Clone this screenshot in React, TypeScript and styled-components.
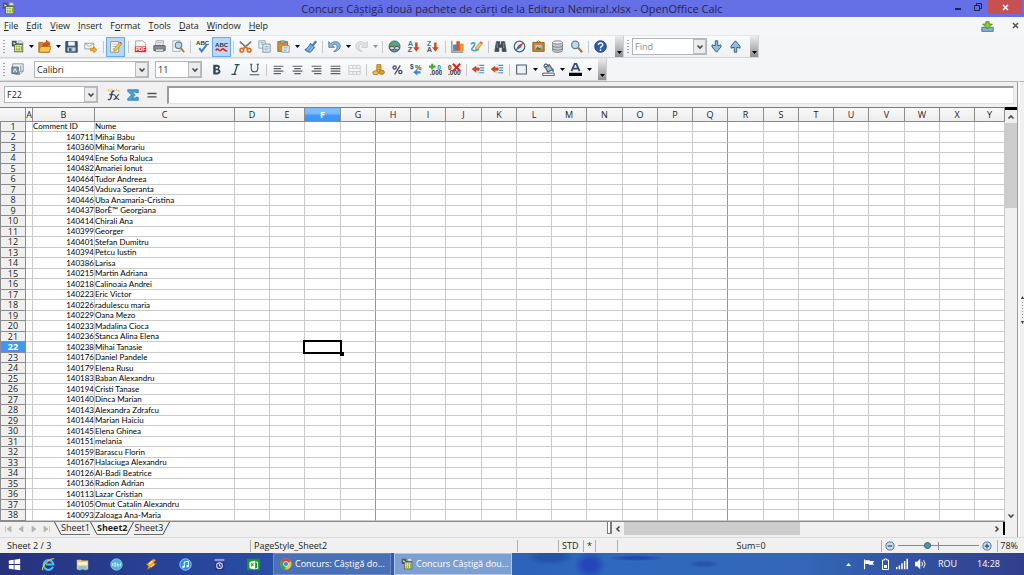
import React from "react";
import styled, { createGlobalStyle, css } from "styled-components";

const Global = createGlobalStyle`
  *, *::before, *::after { box-sizing: border-box; }
  html, body { margin: 0; padding: 0; }
  body { background: #f0f0f0; font-family: "Open Sans", "Noto Sans", sans-serif; font-size: 9px; line-height: 12px; color: #1c1c1c; }
  button, input, select { font: inherit; color: inherit; margin: 0; padding: 0; border: 0; background: none; border-radius: 0; }
  button:focus, input:focus, select:focus { outline: none; }
`;

/* ---------- window frame ---------- */

const Window = styled.div`
  display: flex;
  flex-direction: column;
  height: 100vh;
  overflow: hidden;
`;

const TitleBar = styled.header`
  flex: none;
  display: grid;
  grid-template-columns: 1fr auto 1fr;
  height: 17px;
  background: #6570e6;
  color: #26264e;
`;

const TitleIcon = styled.span`
  display: flex;
  align-items: center;
  padding-left: 2px;
`;

const Title = styled.h1`
  margin: 0;
  font-size: 11px;
  line-height: 17px;
  font-weight: 400;
  white-space: nowrap;
`;

const WindowControls = styled.div`
  display: flex;
  justify-content: flex-end;
  align-items: flex-start;
  padding-right: 2px;
`;

const WindowButton = styled.button<{ $close?: boolean }>`
  display: flex;
  align-items: center;
  justify-content: center;
  width: ${(p) => (p.$close ? 34 : 20)}px;
  height: 14px;
  background: ${(p) => (p.$close ? "#c75050" : "transparent")};
`;

const MenuBar = styled.nav`
  flex: none;
  display: flex;
  align-items: center;
  gap: 8px;
  height: 18px;
  padding: 0 4px;
  background: #f5f6f8;
`;

const MenuItem = styled.button`
  line-height: 16px;
  white-space: nowrap;
`;

const Mnemonic = styled.u`
  text-underline-offset: 1px;
`;

const MenuEnd = styled.div`
  display: flex;
  align-items: center;
  gap: 18px;
  margin-left: auto;
`;

const PlainIconButton = styled.button`
  display: flex;
`;

/* ---------- toolbars ---------- */

const ToolbarRow = styled.div`
  flex: none;
  display: flex;
  height: 23px;
  background: #f4f5f7;
`;

const Toolbar = styled.div`
  display: flex;
  align-items: center;
  height: 23px;
  border-top: 1px solid #e4e5e7;
  border-right: 1px solid #cfcfd1;
  border-bottom: 1px solid #d6d7d9;
  background: linear-gradient(#fafbfc, #eff0f2);
`;

const Grip = styled.span`
  width: 2px;
  height: 14px;
  margin: 0 3px;
  background: repeating-linear-gradient(#a2a2a4 0 1px, transparent 1px 3px);
`;

const ToolButton = styled.button<{ $on?: boolean }>`
  display: flex;
  align-items: center;
  justify-content: center;
  width: 19px;
  height: 20px;
  border: 1px solid transparent;
  ${(p) =>
    p.$on &&
    css`
      background: #b9d8f8;
      border-color: #6aa9ea;
    `}
`;

const ArrowButton = styled.button<{ $dim?: boolean }>`
  display: flex;
  align-items: center;
  justify-content: center;
  width: 8px;
  height: 20px;
  opacity: ${(p) => (p.$dim ? 0.4 : 1)};
`;

const Separator = styled.span<{ $wide?: boolean }>`
  width: ${(p) => (p.$wide ? 6 : 5)}px;
  height: 12px;
  background: linear-gradient(#c6c7ca, #c6c7ca) center / 1px 100% no-repeat;
`;

const Overflow = styled.button`
  display: flex;
  align-items: flex-end;
  justify-content: center;
  width: 8px;
  height: 21px;
  margin-left: 5px;
  padding-bottom: 3px;
  background: linear-gradient(#ececec, #8f8f8f);
`;

const Combo = styled.div<{ $width: number; $gap?: number }>`
  display: flex;
  width: ${(p) => p.$width}px;
  height: 17px;
  margin-left: ${(p) => p.$gap || 0}px;
  border: 1px solid #b4b5ba;
  background: #fff;
`;

const ComboInput = styled.input`
  flex: 1;
  min-width: 0;
  padding-left: 2px;
  line-height: 15px;
  &::placeholder { color: #8a8a8a; opacity: 1; }
`;

const ComboButton = styled.button`
  display: flex;
  align-items: center;
  justify-content: center;
  width: 13px;
  height: 15px;
  border: 1px solid #bcbcbc;
  background: #ececec;
`;

const Gap = styled.span<{ $wide?: boolean }>`
  width: ${(p) => (p.$wide ? 6 : 5)}px;
`;

/* ---------- work area ---------- */

const Work = styled.div`
  flex: 1;
  min-height: 0;
  display: flex;
  background: #f0f0f0;
`;

const Main = styled.main`
  flex: 1;
  min-width: 0;
  display: flex;
  flex-direction: column;
  border-top: 1px solid #b2b2b2;
  border-right: 1px solid #9c9c9c;
`;

const SideStrip = styled.aside`
  flex: none;
  display: flex;
  align-items: center;
  justify-content: center;
  width: 6px;
  border-top: 1px solid #b2b2b2;
  border-left: 2px solid #fafafa;
`;

const FormulaBar = styled.div`
  flex: none;
  display: flex;
  align-items: center;
  height: 25px;
  padding: 0 3px 0 4px;
`;

const FormulaInput = styled.input`
  flex: 1;
  min-width: 0;
  height: 18px;
  margin-left: 6px;
  padding: 0 3px;
  border: 1px solid #e2e2e2;
  border-top: 2px solid #9b9b9b;
  border-left: 2px solid #9b9b9b;
  background: #fff;
`;

const SheetArea = styled.div`
  flex: 1;
  min-height: 0;
  display: flex;
`;

const GridClip = styled.div`
  flex: 1;
  min-width: 0;
  overflow: hidden;
  background: #fff;
  border-bottom: 1px solid #8a8a8a;
`;

const Sheet = styled.table`
  table-layout: fixed;
  width: 100%;
  border-collapse: separate;
  border-spacing: 0;
`;

const ColumnHead = styled.th<{ $selected?: boolean }>`
  height: 15px;
  padding: 0;
  border-top: 1px solid #7e7e7e;
  border-right: 1px solid #8c8c8c;
  border-bottom: 1px solid #8c8c8c;
  background: ${(p) => (p.$selected ? "linear-gradient(#7cbcfb 0 40%, #3f97f3 60%)" : "linear-gradient(#f9f9f9, #ededed)")};
  color: ${(p) => (p.$selected ? "#fff" : "#222")};
  font-weight: ${(p) => (p.$selected ? 700 : 400)};
  line-height: 12px;
`;

const RowHead = styled.th<{ $selected?: boolean }>`
  padding: 0;
  border-right: 1px solid #8c8c8c;
  border-bottom: 1px solid #8c8c8c;
  border-left: 1px solid #8c8c8c;
  background: ${(p) => (p.$selected ? "#3f97f3" : "#f0f0f0")};
  color: ${(p) => (p.$selected ? "#fff" : "#222")};
  font-weight: ${(p) => (p.$selected ? 700 : 400)};
`;

const Row = styled.tr`
  height: 11px;
  line-height: 10px;
  &:nth-child(odd) { height: 10px; line-height: 9px; }
`;

const Cell = styled.td<{ $right?: boolean; $page?: boolean; $active?: boolean }>`
  padding: 0;
  border-right: 1px solid ${(p) => (p.$page ? "#969696" : "#cacaca")};
  border-bottom: 1px solid #cacaca;
  font-family: Lato, "Noto Sans", sans-serif;
  font-size: 8px;
  color: #000;
  text-align: ${(p) => (p.$right ? "right" : "left")};
  white-space: nowrap;
  ${(p) => p.$active && css`position: relative;`}
`;

const CellCursor = styled.span`
  position: absolute;
  inset: -2px;
  border: 2px solid #000;
  &::after {
    content: "";
    position: absolute;
    right: -4px;
    bottom: -4px;
    width: 4px;
    height: 4px;
    background: #000;
  }
`;

const VerticalBar = styled.div`
  flex: none;
  display: flex;
  flex-direction: column;
  width: 12px;
  border-top: 3px solid #000;
`;

const ScrollArrow = styled.button`
  flex: none;
  display: flex;
  align-items: center;
  justify-content: center;
  width: 12px;
  height: 13px;
`;

const Track = styled.div<{ $row?: boolean }>`
  flex: 1;
  min-height: 0;
  display: flex;
  flex-direction: ${(p) => (p.$row ? "row" : "column")};
`;

const Thumb = styled.div<{ $share: number }>`
  flex: 0 0 ${(p) => p.$share}%;
  background: #cdcdcd;
`;

const TabRow = styled.div`
  flex: none;
  display: flex;
  align-items: flex-start;
  height: 15px;
  padding-right: 12px;
`;

const TabNav = styled.div`
  display: flex;
  align-items: center;
  width: 54px;
  height: 13px;
  padding-left: 1px;
`;

const NavButton = styled.button`
  display: flex;
  justify-content: center;
  width: 13px;
`;

const Tab = styled.button<{ $active?: boolean }>`
  height: 13px;
  border-bottom: 1px solid #6c6c6c;
  background: ${(p) => (p.$active ? "#fff" : "#f0f0f0")};
  font-weight: ${(p) => (p.$active ? 700 : 400)};
  line-height: 12px;
`;

const Tabs = styled.div`
  flex: none;
  display: flex;
  width: 607px;
`;

const SplitHandle = styled.span`
  flex: none;
  width: 5px;
  height: 12px;
  border: 1px solid #7a7a7a;
  border-right-width: 2px;
  border-top: 0;
  background: #fff;
`;

const HorizontalBar = styled.div`
  flex: 1;
  display: flex;
  height: 13px;
  border-right: 2px solid #000;
`;

/* ---------- status bar ---------- */

const StatusBar = styled.footer`
  flex: none;
  display: flex;
  align-items: center;
  height: 16px;
  border-top: 1px solid #dadada;
  background: #f0f0f0;
  padding-right: 6px;
`;

const StatusCell = styled.div<{ $width?: number; $center?: boolean; $first?: boolean }>`
  flex: ${(p) => (p.$width ? `0 0 ${p.$width}px` : "1 1 0")};
  height: 12px;
  padding-left: ${(p) => (p.$first ? 7 : 3)}px;
  border-right: 1px solid #b0b0b0;
  text-align: ${(p) => (p.$center ? "center" : "left")};
  white-space: nowrap;
`;

const ZoomGroup = styled.div`
  display: flex;
  align-items: center;
  gap: 3px;
  width: 116px;
  height: 12px;
  padding: 0 5px 0 3px;
  border-right: 1px solid #b0b0b0;
`;

const ZoomSlider = styled.input`
  flex: 1;
  min-width: 0;
  height: 10px;
  appearance: none;
  background:
    linear-gradient(#8a8a8a, #8a8a8a) 50% 50% / 1px 8px no-repeat,
    linear-gradient(#8a8a8a, #8a8a8a) 0 50% / 100% 1px no-repeat;
  &::-webkit-slider-thumb {
    appearance: none;
    width: 7px;
    height: 7px;
    border: 1px solid #2f5e7c;
    border-radius: 50%;
    background: #5890b0;
  }
`;

const ZoomValue = styled.span`
  padding-left: 2px;
`;

/* ---------- taskbar ---------- */

const TaskBar = styled.div`
  flex: none;
  display: flex;
  align-items: center;
  height: 22px;
  color: #fff;
  background:
    radial-gradient(ellipse 24px 8px at 550px 4px, #2453a9 50%, transparent 100%),
    radial-gradient(ellipse 16px 14px at 590px 12px, #2546b8 40%, transparent 100%),
    radial-gradient(ellipse 28px 3px at 636px 5px, #2449b4 40%, transparent 100%),
    radial-gradient(ellipse 16px 4px at 704px 11px, #2655ac 40%, transparent 100%),
    linear-gradient(90deg, #28317c 0, #27449a 18%, #2c5ab2 36%, #2e69bd 60%, #3467b8 78%, #33509f 90%, #303f8c 100%);
`;

const Pinned = styled.div`
  display: flex;
  justify-content: space-between;
  width: 256px;
  margin: 0 11px 0 6px;
`;

const PinnedButton = styled.button`
  display: flex;
  justify-content: center;
  width: 16px;
`;

const TaskButton = styled.button<{ $active?: boolean }>`
  display: flex;
  align-items: center;
  gap: 3px;
  width: 118px;
  height: 22px;
  margin-right: 3px;
  padding-left: 6px;
  border: 1px solid ${(p) => (p.$active ? "#b3c8e8" : "#6c8cc9")};
  background: ${(p) => (p.$active ? "#7d9fd2" : "#4a70b6")};
  white-space: nowrap;
`;

const Tray = styled.div`
  display: flex;
  align-items: center;
  gap: 7px;
  margin-left: auto;
  padding-right: 24px;
`;

const TrayArrow = styled.button`
  display: flex;
  width: 10px;
`;

const Language = styled.span`
  margin-left: 4px;
`;

const Clock = styled.time`
  margin-left: 13px;
`;

/* ---------- icons ---------- */

const Svg = ({ children, size = 13 }: { children: React.ReactNode; size?: number }) => (
  <svg width={size} height={size} viewBox="0 0 16 16" fill="none" aria-hidden="true">
    {children}
  </svg>
);

const Label = ({ x, y, size, fill, children }: { x: number; y: number; size: number; fill: string; children: string }) => (
  <text x={x} y={y} fontSize={size} fill={fill} fontWeight="700" fontFamily="Liberation Sans, sans-serif">
    {children}
  </text>
);

const sheetIcon = (
  <>
    <path d="M1 1h6v3h8v11H4V8H1z" fill="#4d5a52" />
    <path d="M3 2.500l3 2-3 1z" fill="#dfe8ea" />
    <path d="M5 6h9v8H5z" fill="#e6efb2" />
    <path d="M6 7h2v2H6zM9 7h2v2H9zM6 10h2v3H6zM9 10h2v3H9zM12 7h2v6h-2z" fill="#8fb22a" />
    <path d="M9 1h4l2 3H9z" fill="#eef3f5" stroke="#7d8c92" strokeWidth=".7" />
  </>
);

const icons: Record<string, React.ReactNode> = {
  sheet: sheetIcon,
  open: (
    <>
      <path d="M1 3h5l1 1h7v11H1z" fill="#d98a1d" stroke="#a8630c" />
      <path d="M3 8h13l-2 7H1z" fill="#f9c652" stroke="#b87414" />
      <path d="M6 8c0-4 2-5 4-5V0l5 4-5 4V6C8 6 7 7 6 8z" fill="#e2501f" stroke="#a62f0c" strokeWidth=".6" />
    </>
  ),
  save: (
    <>
      <path d="M1 2h14v13H1z" fill="#3f5a78" stroke="#24384f" />
      <path d="M4 2h8v5H4z" fill="#f3f7fa" />
      <path d="M3 9h10v5H3z" fill="#b9cddd" />
      <path d="M5 10h3v4H5z" fill="#3f5a78" />
    </>
  ),
  mail: (
    <>
      <path d="M1 4h11v7H1z" fill="#f4f4f2" stroke="#909090" />
      <path d="M1 4l5.500 4L12 4" stroke="#a0a0a0" />
      <path d="M8 10h4V8l4 4-4 4v-2.500H8z" fill="#f5a623" stroke="#b87412" strokeWidth=".6" />
    </>
  ),
  edit: (
    <>
      <path d="M2 2h10v13H2z" fill="#fff" stroke="#71899c" />
      <path d="M4 5h6M4 8h5M4 11h6" stroke="#9fb0bc" />
      <path d="M6 11l7-8 2.500 2L9 13l-3 1z" fill="#f6c63b" stroke="#9c7415" strokeWidth=".7" />
      <path d="M13 3l1-1 2 2-.8 1z" fill="#d6485c" />
    </>
  ),
  pdf: (
    <>
      <path d="M2 1h9l3 3v5H2z" fill="#f7f7f7" stroke="#9a9a9a" />
      <path d="M1 8h14v7H1z" fill="#d92d27" />
      <Label x={2} y={14} size={6} fill="#fff">PDF</Label>
    </>
  ),
  print: (
    <>
      <path d="M4 1h9l-1 6H3z" fill="#f8f8f8" stroke="#8d8d8d" />
      <path d="M1 7h14v6H1z" fill="#8c9196" stroke="#4d5154" />
      <path d="M3 11h10v3H3z" fill="#dfe2e4" stroke="#4d5154" strokeWidth=".7" />
      <path d="M5 3h6M5 5h5" stroke="#b5b5b5" />
    </>
  ),
  preview: (
    <>
      <path d="M1 1h9v13H1z" fill="#f3f6f9" stroke="#9aa5af" />
      <circle cx="8" cy="6.500" r="4" fill="#b8d9ee" stroke="#5d7184" strokeWidth="1.300" />
      <path d="M11 10l4 5" stroke="#b07a32" strokeWidth="2.200" />
    </>
  ),
  spell: (
    <>
      <Label x={0} y={6} size={7.5} fill="#333">ABC</Label>
      <path d="M4 10l3 4 6-8" stroke="#3e86c4" strokeWidth="2.600" />
    </>
  ),
  autospell: (
    <>
      <Label x={0} y={8} size={7.5} fill="#333">ABC</Label>
      <path d="M1 13q1.700-3 3.500-1t3.500 0 3.500 0 3.500 1" stroke="#dc2f26" strokeWidth="2.200" />
    </>
  ),
  cut: (
    <>
      <path d="M1 2l9 8M15 2l-9 8" stroke="#74797d" strokeWidth="2" />
      <circle cx="3.500" cy="12.500" r="2.200" stroke="#d87322" strokeWidth="2" />
      <circle cx="12.500" cy="12.500" r="2.200" stroke="#d87322" strokeWidth="2" />
      <path d="M5 11l3-2.500 3 2.500" stroke="#d87322" strokeWidth="2.200" />
    </>
  ),
  copy: (
    <>
      <path d="M1 1h8v9H1z" fill="#eef4f8" stroke="#7c96a8" />
      <path d="M6 5h9v10H6z" fill="#e3edf4" stroke="#6d8799" />
      <path d="M8 8h5M8 10h5M8 12h4M3 3h4M3 5h3" stroke="#94a9b7" />
    </>
  ),
  paste: (
    <>
      <path d="M1 2h12v12H1z" fill="#d3962f" stroke="#8b5d1b" />
      <path d="M4 1h6v3H4z" fill="#a8adb0" stroke="#676b6d" strokeWidth=".7" />
      <path d="M6 7h9v8H6z" fill="#f4f8fa" stroke="#718796" />
      <path d="M8 9h5M8 11h5M8 13h4" stroke="#8fa3b0" />
    </>
  ),
  brush: (
    <>
      <path d="M10 6l4-5 1.500 1.500-4 5z" fill="#5a7ea3" stroke="#2f4f72" strokeWidth=".6" />
      <path d="M8 4l5 5-5 6c-3 0-5-1-7-3 3-2 5-4 7-8z" fill="#5d9bd8" stroke="#2a5f99" />
      <path d="M4 12l4-5M7 14l4-6" stroke="#b9d8f4" />
    </>
  ),
  undo: <path d="M1 2v7h7L5.500 6.500C9 4 12 6 11 10c-.5 2-2 3-4 4 5 0 8-3 8-6.500C15 2 8 0 3.500 4.500z" fill="#8fb9dc" stroke="#38719f" />,
  redo: <path d="M15 2v7H8l2.500-2.500C7 4 4 6 5 10c.5 2 2 3 4 4-5 0-8-3-8-6.500C1 2 8 0 12.500 4.500z" fill="#e4e5e6" stroke="#c0c2c4" />,
  globe: (
    <>
      <circle cx="8" cy="8" r="6.800" fill="#4f9bc4" stroke="#36505f" />
      <path d="M3 4l4-2 1 4-3 3-3-1zM9 4l4 0 1 4-3 3-2-2z" fill="#63a64a" />
      <rect x="2" y="8" width="6" height="4" rx="2" fill="#d6d6d0" stroke="#444" />
      <rect x="8" y="8" width="6" height="4" rx="2" fill="#d6d6d0" stroke="#444" />
    </>
  ),
  sortAz: (
    <>
      <Label x={1} y={7} size={9} fill="#2f7fc4">A</Label>
      <Label x={1} y={15} size={9} fill="#555">Z</Label>
      <path d="M10 3h3v6h2.500l-4 5.500-4-5.500H10z" fill="#cf4a1c" />
    </>
  ),
  sortZa: (
    <>
      <Label x={1} y={7} size={9} fill="#2f7fc4">Z</Label>
      <Label x={1} y={15} size={9} fill="#555">A</Label>
      <path d="M10 3h3v6h2.500l-4 5.500-4-5.500H10z" fill="#cf4a1c" />
    </>
  ),
  chart: (
    <>
      <path d="M1 1v14h14" stroke="#7c868d" strokeWidth="1.500" />
      <path d="M3 6h3.500v7H3z" fill="#4a8ecb" stroke="#2b5e8d" strokeWidth=".6" />
      <path d="M7 2h3.500v11H7z" fill="#e5532a" stroke="#9e3211" strokeWidth=".6" />
      <path d="M11 5h4v8h-4z" fill="#f2a530" stroke="#a86c12" strokeWidth=".6" />
    </>
  ),
  draw: (
    <>
      <path d="M1 5c4-3 6-1 4 2s-5 5-1 6 6-1 7-2" stroke="#4aa0dc" strokeWidth="2" />
      <path d="M7 9l5-6 3 2-5 6-3.500 1z" fill="#f5c53c" stroke="#9e7612" strokeWidth=".6" />
      <path d="M12 3l1-1.500 3 2L15 5z" fill="#db5a6c" />
    </>
  ),
  find: (
    <>
      <path d="M3 2h4v3l1 1 1-1V2h4l2 12h-5V9H6v5H1z" fill="#444b52" stroke="#444b52" />
      <path d="M4 4v6M12 4v6" stroke="#98a3ab" />
    </>
  ),
  navigator: (
    <>
      <circle cx="8" cy="8" r="6.500" fill="#eaf2f8" stroke="#44617a" strokeWidth="1.500" />
      <path d="M13 3L9.500 9.500 6.500 6.500z" fill="#d93b26" />
      <path d="M3 13l3.500-6.500 3 3z" fill="#2e6bb4" />
    </>
  ),
  gallery: (
    <>
      <path d="M5 3l3-2 3 2" stroke="#8b5d1b" />
      <path d="M1 3h14v11H1z" fill="#c9862c" stroke="#8a5414" />
      <path d="M4 6h8v6H4z" fill="#9ecbe8" />
      <path d="M4 12l3-4 2 2 1-1 2 3z" fill="#4c7b3a" />
    </>
  ),
  data: (
    <>
      <path d="M2 3v10c0 3 12 3 12 0V3z" fill="#c9ccce" stroke="#6e7275" />
      <ellipse cx="8" cy="3" rx="6" ry="2" fill="#f1f2f3" stroke="#6e7275" />
      <path d="M2 7c0 2.500 12 2.500 12 0M2 10.500c0 2.500 12 2.500 12 0" stroke="#6e7275" />
    </>
  ),
  zoom: (
    <>
      <circle cx="6.500" cy="6" r="4.500" fill="#b9dcf2" stroke="#5e7f98" strokeWidth="1.500" />
      <path d="M10 9.500l5 5.500" stroke="#a8733a" strokeWidth="2.600" />
    </>
  ),
  help: (
    <>
      <circle cx="8" cy="8" r="7.200" fill="#2b5cb5" stroke="#1c3d80" />
      <path d="M5.500 6c0-3.200 5.500-3 5.200 0C10.500 8 8 7.800 8 10M8 11.500v2" stroke="#fff" strokeWidth="1.800" />
    </>
  ),
  down: <path d="M6.500 1h3v6l4-1v2.500L8 15 2.500 8.500V6l4 1z" fill="#8fc0e0" stroke="#2f5f84" strokeWidth="1.200" />,
  up: <path d="M6.500 15h3V9l4 1V7.500L8 1 2.500 7.500V10l4-1z" fill="#8fc0e0" stroke="#2f5f84" strokeWidth="1.200" />,
  styles: (
    <>
      <path d="M2 1h13v9l-4 4H5V9H2z" fill="#eef1f3" stroke="#7c868d" />
      <path d="M1 5h8v8H1z" fill="#8498a8" stroke="#4e606d" />
      <path d="M3 11l2-4 2 4" stroke="#fff" />
      <path d="M12 3v6M10 14l1-4h4" stroke="#6b7982" />
    </>
  ),
  bold: <path d="M4 2h5c4 0 4 5 1 5.500 4 .5 4 6.500-1 6.500H4zM7 4.500V7h1.500c2 0 2-2.500 0-2.500zM7 9v2.600h2c2 0 2-2.600 0-2.600z" fill="#33475b" fillRule="evenodd" />,
  italic: <path d="M7 2h6M3 14h6M10.500 2l-4 12" stroke="#33475b" strokeWidth="1.700" />,
  underline: <path d="M4 1v6c0 5 8 5 8 0V1M2 14.500h12M2.500 1.500h3M10.500 1.500h3" stroke="#43586b" strokeWidth="1.400" />,
  left: <path d="M2 4h12M2 7h9M2 10h12M2 13h9" stroke="#5c6064" strokeWidth="1.400" />,
  center: <path d="M2 4h12M4 7h8M2 10h12M4 13h8" stroke="#5c6064" strokeWidth="1.400" />,
  right: <path d="M2 4h12M5 7h9M2 10h12M5 13h9" stroke="#5c6064" strokeWidth="1.400" />,
  justify: <path d="M2 4h12M2 7h12M2 10h12M2 13h12" stroke="#5c6064" strokeWidth="1.400" />,
  merge: <path d="M1 3h14v11H1zM1 6.500h14M1 10.500h14M6 3v3.500M10.500 3v3.500M6 10.500V14M10.500 10.500V14" stroke="#c4c6c8" />,
  currency: (
    <>
      <path d="M6 2h5v10H6z" fill="#f1b13d" stroke="#a46b10" />
      <path d="M6 5h5M6 8h5" stroke="#a46b10" strokeWidth=".7" />
      <ellipse cx="4.500" cy="12" rx="3.500" ry="2.500" fill="#f5bd4e" stroke="#a46b10" />
      <ellipse cx="12" cy="11.500" rx="3.300" ry="2.500" fill="#e99a2b" stroke="#a46b10" />
    </>
  ),
  percent: (
    <>
      <circle cx="4.500" cy="5.500" r="2" stroke="#3f4c58" strokeWidth="1.600" />
      <circle cx="11.500" cy="11" r="2" stroke="#3f4c58" strokeWidth="1.600" />
      <path d="M11.500 3l-7 11" stroke="#3f4c58" strokeWidth="1.500" />
    </>
  ),
  standard: (
    <>
      <Label x={0} y={7} size={8} fill="#2d4a66">$</Label>
      <Label x={6} y={8} size={9} fill="#3f4c58">%</Label>
      <path d="M13 10v3H9v2.500L4 11.500l5-4V10z" fill="#3e86c4" />
    </>
  ),
  addDecimal: (
    <>
      <path d="M4 1v7M0 4.500h8" stroke="#4fa42c" strokeWidth="2.600" />
      <Label x={10} y={8} size={8} fill="#2f6fd0">0</Label>
      <Label x={1} y={15} size={8} fill="#333">.000</Label>
    </>
  ),
  delDecimal: (
    <>
      <Label x={0} y={8} size={8} fill="#333">0</Label>
      <Label x={0} y={15} size={8} fill="#333">.000</Label>
      <path d="M6 1l9 9M15 1l-9 9" stroke="#d8261c" strokeWidth="2.600" />
    </>
  ),
  outdent: (
    <>
      <path d="M9 3h6M10 6h5M10 9h5M9 12h6" stroke="#4a90c4" strokeWidth="1.400" />
      <path d="M7.500 1v14" stroke="#9fa7ac" strokeDasharray="1 1" />
      <path d="M5 4v2h4v3H5v2.500L0 7.500z" fill="#d1491f" stroke="#8f2d0e" strokeWidth=".5" />
    </>
  ),
  borders: <path d="M2 2.500h12v11H2z" fill="#eef2f5" stroke="#4c5a69" strokeWidth="1.300" />,
  background: (
    <>
      <path d="M4 5l5-3 4 6-6 3z" fill="#9fc0d8" stroke="#45596a" strokeWidth="1.300" />
      <path d="M3 6c-2-5 4-7 5-1" stroke="#45596a" strokeWidth="1.300" />
      <path d="M13 6c2.500 2 1.500 5 .5 5s-1.500-2-.5-5z" fill="#3a6f96" />
      <path d="M1 12.500h14v3H1z" fill="#fff" stroke="#333" />
    </>
  ),
  fontColor: (
    <>
      <path d="M3 10L7 1h2l4 9M5 7h6" stroke="#33516e" strokeWidth="2.200" />
      <path d="M0 12h16v4H0z" fill="#000" />
    </>
  ),
  wizard: (
    <>
      <path d="M1 2l2 1M6 1v1M11 2l1 1M4 4l1 0M14 4l1-1" stroke="#eeb52f" strokeWidth="2" />
      <path d="M9 4c-3-1-3 1-3.500 5S4 15 1 14M3 8h5" stroke="#33475b" strokeWidth="1.700" />
      <path d="M8 8c3 0 3 7 7 6M15 8c-3 0-4 7-7 6" stroke="#33475b" strokeWidth="1.500" />
    </>
  ),
  sigma: <path d="M1 1h14v4h-3l-1-1H7l4 4-4 4h4l1-1h3v4H1v-2l5-5-5-5z" fill="#4aa3dd" stroke="#2471a8" />,
  equals: <path d="M2 6h12M2 10.500h12" stroke="#4a4f54" strokeWidth="1.800" />,
};

const Caret = () => (
  <svg width="5" height="3" viewBox="0 0 5 3" aria-hidden="true">
    <path d="M0 0h5L2.500 3z" fill="#000" />
  </svg>
);

const Chevron = ({ dir = "down" }: { dir?: "down" | "up" | "left" | "right" }) => {
  const d = {
    down: "M1.500 2.500L4 5l2.500-2.500",
    up: "M1.500 5.500L4 3l2.500 2.500",
    left: "M5.500 1.500L3 4l2.500 2.500",
    right: "M2.500 1.500L5 4 2.500 6.500",
  }[dir];
  return (
    <svg width="8" height="8" viewBox="0 0 8 8" fill="none" aria-hidden="true">
      <path d={d} stroke="#4a4a4a" strokeWidth="1.600" />
    </svg>
  );
};

/* ---------- data ---------- */

const menus: [string, string, string][] = [
  ["", "F", "ile"], ["", "E", "dit"], ["", "V", "iew"], ["", "I", "nsert"], ["F", "o", "rmat"],
  ["", "T", "ools"], ["", "D", "ata"], ["", "W", "indow"], ["", "H", "elp"],
];

type Tool = { icon?: string; label?: string; on?: boolean; arrow?: boolean; dim?: boolean; sep?: "narrow" | "wide" };

const standardTools: Tool[] = [
  { icon: "sheet", label: "New", arrow: true }, { icon: "open", label: "Open", arrow: true },
  { icon: "save", label: "Save" }, { icon: "mail", label: "E-mail" }, { sep: "wide" },
  { icon: "edit", label: "Edit File", on: true }, { sep: "wide" },
  { icon: "pdf", label: "Export as PDF" }, { icon: "print", label: "Print" }, { icon: "preview", label: "Page Preview" }, { sep: "narrow" },
  { icon: "spell", label: "Spellcheck" }, { icon: "autospell", label: "AutoSpellcheck", on: true }, { sep: "narrow" },
  { icon: "cut", label: "Cut" }, { icon: "copy", label: "Copy" }, { icon: "paste", label: "Paste", arrow: true }, { icon: "brush", label: "Format Paintbrush" }, { sep: "narrow" },
  { icon: "undo", label: "Undo", arrow: true }, { icon: "redo", label: "Redo", arrow: true, dim: true }, { sep: "wide" },
  { icon: "globe", label: "Hyperlink" }, { icon: "sortAz", label: "Sort Ascending" }, { icon: "sortZa", label: "Sort Descending" }, { sep: "wide" },
  { icon: "chart", label: "Chart" }, { icon: "draw", label: "Show Draw Functions" }, { sep: "narrow" },
  { icon: "find", label: "Find and Replace" }, { icon: "navigator", label: "Navigator" }, { icon: "gallery", label: "Gallery" },
  { icon: "data", label: "Data Sources" }, { icon: "zoom", label: "Zoom" }, { sep: "narrow" },
  { icon: "help", label: "Help" },
];

const formatTools: Tool[] = [
  { icon: "bold", label: "Bold" }, { icon: "italic", label: "Italic" }, { icon: "underline", label: "Underline" }, { sep: "narrow" },
  { icon: "left", label: "Align Left" }, { icon: "center", label: "Center" }, { icon: "right", label: "Align Right" },
  { icon: "justify", label: "Justified" }, { icon: "merge", label: "Merge Cells" }, { sep: "narrow" },
  { icon: "currency", label: "Currency" }, { icon: "percent", label: "Percent" }, { icon: "standard", label: "Standard" },
  { icon: "addDecimal", label: "Add Decimal Place" }, { icon: "delDecimal", label: "Delete Decimal Place" }, { sep: "narrow" },
  { icon: "outdent", label: "Decrease Indent" }, { icon: "outdent", label: "Increase Indent" }, { sep: "narrow" },
  { icon: "borders", label: "Borders", arrow: true }, { icon: "background", label: "Background Color", arrow: true },
  { icon: "fontColor", label: "Font Color", arrow: true },
];

const columns = "ABCDEFGHIJKLMNOPQRSTUVWXY".split("");
const columnWidth = (i: number) => {
  if (i === columns.length - 1) return undefined;
  if (i < 3) return [7, 62, 140][i];
  return (i - 2) % 4 === 3 ? 36 : 35;
};

const entries: [string, string][] = [
  ["140711", "Mihai Babu"], ["140360", "Mihai Morariu"], ["140494", "Ene Sofia Raluca"], ["140482", "Amariei Ionut"],
  ["140464", "Tudor Andreea"], ["140454", "Vaduva Speranta"], ["140446", "Uba Anamaria-Cristina"], ["140437", "BorÈ™ Georgiana"],
  ["140414", "Chirali Ana"], ["140399", "Georger"], ["140401", "Stefan Dumitru"], ["140394", "Petcu Iustin"],
  ["140386", "Larisa"], ["140215", "Martin Adriana"], ["140218", "Calinoaia Andrei"], ["140223", "Eric Victor"],
  ["140226", "radulescu maria"], ["140229", "Oana Mezo"], ["140233", "Madalina Cioca"], ["140236", "Stanca Alina Elena"],
  ["140238", "Mihai Tanasie"], ["140176", "Daniel Pandele"], ["140179", "Elena Rusu"], ["140183", "Baban Alexandru"],
  ["140194", "Cristi Tanase"], ["140140", "Dinca Marian"], ["140143", "Alexandra Zdrafcu"], ["140144", "Marian Haiciu"],
  ["140145", "Elena Ghinea"], ["140151", "melania"], ["140159", "Barascu Florin"], ["140167", "Halaciuga Alexandru"],
  ["140126", "Al-Badi Beatrice"], ["140136", "Radion Adrian"], ["140113", "Lazar Cristian"], ["140105", "Omut Catalin Alexandru"],
  ["140093", "Zaloaga Ana-Maria"],
];
const rows: [string, string][] = [["Comment ID", "Nume"], ...entries];
const selected = { row: 21, column: 5 };

const pinned: [string, React.ReactNode][] = [
  ["Start", <path d="M1 3l6-1v5.500H1zM8 2l7-1v6.500H8zM1 8.500h6V14l-6-1zM8 8.500h7V15l-7-1z" fill="#fff" />],
  ["Internet Explorer", (
    <>
      <path d="M13.500 11A6 6 0 1 1 14 8H5" stroke="#45c0f5" strokeWidth="2.600" />
      <path d="M1 15C-1 11 9 0 15 1" stroke="#f3c739" strokeWidth="1.400" />
    </>
  )],
  ["File Explorer", (
    <>
      <path d="M1 2h5l1 1h8v11H1z" fill="#e9c96b" />
      <path d="M2 5h12v4H2z" fill="#fbf1c2" />
      <path d="M3 10h10v5h-3v-2H6v2H3z" fill="#7bc3e8" />
    </>
  )],
  ["Media Suite", (
    <>
      <circle cx="8" cy="8" r="7" fill="#4fb4d8" stroke="#8fd3ea" />
      <path d="M3 6v4M5 6h2v4H5zM9 6v4h2V8H9M13 6v4" stroke="#d8f1f8" />
    </>
  )],
  ["Winamp", (
    <>
      <path d="M10 1L1 8l3 2-2 5L15 7l-4-1 3-4z" fill="#f0a32c" stroke="#5c4a36" />
      <path d="M9 4L5 7.500M11 8l-4 3" stroke="#fff3cf" strokeWidth="1.500" />
    </>
  )],
  ["iTunes", (
    <>
      <circle cx="8" cy="8" r="7" fill="#2390de" stroke="#b9e0f7" />
      <path d="M6.500 11V5l5-1v6" stroke="#fff" strokeWidth="1.300" />
      <circle cx="5.500" cy="11" r="1.500" fill="#fff" />
      <circle cx="10.500" cy="10" r="1.500" fill="#fff" />
    </>
  )],
  ["Device Manager", (
    <>
      <path d="M2 1h12v14H2z" fill="#2b3390" />
      <path d="M2 1h12v3H2z" fill="#8f97d8" />
      <circle cx="8" cy="9.500" r="3.500" stroke="#d7dcf8" strokeWidth="1.300" />
      <path d="M8 7.500v2.500h2" stroke="#fff" />
    </>
  )],
  ["Store", (
    <>
      <path d="M0 1h16v14H0z" fill="#0f9d1f" />
      <path d="M3 5l7-2v11l-7-1.500z" fill="#fff" />
      <path d="M10.500 5H13v8h-2.500" stroke="#fff" strokeWidth="1.200" />
      <path d="M5 6.500l3 3M5 10l3-3.500" stroke="#0f9d1f" strokeWidth="1.300" />
    </>
  )],
];

/* ---------- parts ---------- */

const Tools = ({ items }: { items: Tool[] }) => (
  <>
    {items.map((t, i) =>
      t.sep ? (
        <Separator key={i} $wide={t.sep === "wide"} />
      ) : (
        <React.Fragment key={i}>
          <ToolButton aria-label={t.label} aria-pressed={t.on} $on={t.on}>
            <Svg>{icons[t.icon!]}</Svg>
          </ToolButton>
          {t.arrow && (
            <ArrowButton aria-label={`${t.label} options`} $dim={t.dim}>
              <Caret />
            </ArrowButton>
          )}
        </React.Fragment>
      )
    )}
  </>
);

const ComboBox = ({ label, value, width, gap, placeholder }: { label: string; value?: string; width: number; gap?: number; placeholder?: string }) => (
  <Combo $width={width} $gap={gap}>
    <ComboInput aria-label={label} defaultValue={value} placeholder={placeholder} />
    <ComboButton aria-label={`${label} list`}>
      <Chevron />
    </ComboButton>
  </Combo>
);

const TabEdge = ({ rising }: { rising?: boolean }) => (
  <svg width="7" height="13" viewBox="0 0 7 13" fill="none" aria-hidden="true">
    <path d={rising ? "M0 12.500L6.500 0" : "M0.500 0L7 12.500"} stroke="#4c4c4c" />
  </svg>
);

const Spreadsheet = () => (
  <Sheet>
    <colgroup>
      <col style={{ width: 26 }} />
      {columns.map((c, i) => (
        <col key={c} style={{ width: columnWidth(i) }} />
      ))}
    </colgroup>
    <thead>
      <tr>
        <ColumnHead aria-label="Select all" />
        {columns.map((c, i) => (
          <ColumnHead key={c} scope="col" $selected={i === selected.column}>{c}</ColumnHead>
        ))}
      </tr>
    </thead>
    <tbody>
      {rows.map(([id, name], r) => (
        <Row key={r}>
          <RowHead scope="row" $selected={r === selected.row}>{r + 1}</RowHead>
          {columns.map((c, i) => {
            const active = r === selected.row && i === selected.column;
            return (
              <Cell key={c} $right={i === 1 && r > 0} $page={i === 6 || i === 16} $active={active}>
                {i === 1 ? id : i === 2 ? name : null}
                {active && <CellCursor />}
              </Cell>
            );
          })}
        </Row>
      ))}
    </tbody>
  </Sheet>
);

export default function App() {
  return (
    <Window>
      <Global />
      <TitleBar>
        <TitleIcon><Svg>{sheetIcon}</Svg></TitleIcon>
        <Title>Concurs Câștigă două pachete de cărți de la Editura Nemira!.xlsx - OpenOffice Calc</Title>
        <WindowControls>
          <WindowButton aria-label="Minimize">
            <svg width="8" height="8" viewBox="0 0 8 8"><path d="M1 5h6v2H1z" fill="#20204a" /></svg>
          </WindowButton>
          <WindowButton aria-label="Restore">
            <svg width="8" height="8" viewBox="0 0 8 8" fill="none"><path d="M2.500 2V.5h5v5H6M.5 2.500h5v5h-5z" stroke="#20204a" /></svg>
          </WindowButton>
          <WindowButton aria-label="Close" $close>
            <svg width="7" height="7" viewBox="0 0 7 7"><path d="M1 1l5 5M6 1L1 6" stroke="#fff" strokeWidth="1.500" /></svg>
          </WindowButton>
        </WindowControls>
      </TitleBar>

      <MenuBar>
        {menus.map(([before, key, after]) => (
          <MenuItem key={key + after}>
            {before}<Mnemonic>{key}</Mnemonic>{after}
          </MenuItem>
        ))}
        <MenuEnd>
          <PlainIconButton aria-label="Update available">
            <Svg>
              <path d="M1 9h14v5H1z" fill="#7fb2d8" stroke="#376a92" />
              <path d="M6 2h4v3h4l-6 6-6-6h4z" fill="#8cc63a" stroke="#4c7d17" />
            </Svg>
          </PlainIconButton>
          <PlainIconButton aria-label="Close document">
            <svg width="8" height="8" viewBox="0 0 8 8"><path d="M1 1l5 5M6 1L1 6" stroke="#50555a" strokeWidth="1.500" /></svg>
          </PlainIconButton>
        </MenuEnd>
      </MenuBar>

      <ToolbarRow>
        <Toolbar role="toolbar" aria-label="Standard">
          <Grip />
          <Tools items={standardTools} />
          <Overflow aria-label="More standard tools"><Caret /></Overflow>
        </Toolbar>
        <Toolbar role="toolbar" aria-label="Find">
          <Grip />
          <ComboBox label="Find" placeholder="Find" width={75} />
          <ToolButton aria-label="Find next"><Svg>{icons.down}</Svg></ToolButton>
          <ToolButton aria-label="Find previous"><Svg>{icons.up}</Svg></ToolButton>
          <Overflow aria-label="More find tools"><Caret /></Overflow>
        </Toolbar>
      </ToolbarRow>

      <ToolbarRow>
        <Toolbar role="toolbar" aria-label="Formatting">
          <Grip />
          <ToolButton aria-label="Styles"><Svg>{icons.styles}</Svg></ToolButton>
          <ComboBox label="Font name" value="Calibri" width={115} gap={7} />
          <ComboBox label="Font size" value="11" width={47} gap={6} />
          <Gap />
          <Tools items={formatTools} />
          <Overflow aria-label="More formatting tools"><Caret /></Overflow>
        </Toolbar>
      </ToolbarRow>

      <Work>
        <Main>
          <FormulaBar>
            <ComboBox label="Name box" value="F22" width={94} />
            <Gap $wide />
            <ToolButton aria-label="Function Wizard"><Svg>{icons.wizard}</Svg></ToolButton>
            <ToolButton aria-label="Sum"><Svg size={12}>{icons.sigma}</Svg></ToolButton>
            <ToolButton aria-label="Function"><Svg size={12}>{icons.equals}</Svg></ToolButton>
            <FormulaInput aria-label="Input line" />
          </FormulaBar>

          <SheetArea>
            <GridClip><Spreadsheet /></GridClip>
            <VerticalBar>
              <ScrollArrow aria-label="Scroll up"><Chevron dir="up" /></ScrollArrow>
              <Track><Thumb $share={22} /></Track>
              <ScrollArrow aria-label="Scroll down"><Chevron /></ScrollArrow>
            </VerticalBar>
          </SheetArea>

          <TabRow>
            <Tabs>
              <TabNav>
                {[
                  ["First sheet", "M1.500 1v6M7 1v6L3 4z"],
                  ["Previous sheet", "M6 1v6L2 4z"],
                  ["Next sheet", "M2 1v6l4-3z"],
                  ["Last sheet", "M1 1v6l4-3zM6.500 1v6"],
                ].map(([label, d]) => (
                  <NavButton key={label} aria-label={label}>
                    <svg width="8" height="8" viewBox="0 0 8 8"><path d={d} fill="#b4b4b4" stroke="#b4b4b4" strokeWidth=".7" /></svg>
                  </NavButton>
                ))}
              </TabNav>
              <TabEdge />
              <Tab>Sheet1</Tab>
              <TabEdge />
              <Tab $active>Sheet2</Tab>
              <TabEdge rising />
              <Tab>Sheet3</Tab>
              <TabEdge rising />
            </Tabs>
            <SplitHandle />
            <HorizontalBar>
              <ScrollArrow aria-label="Scroll left"><Chevron dir="left" /></ScrollArrow>
              <Track $row><Thumb $share={48} /></Track>
              <ScrollArrow aria-label="Scroll right"><Chevron dir="right" /></ScrollArrow>
            </HorizontalBar>
          </TabRow>
        </Main>
        <SideStrip>
          <svg width="3" height="28" viewBox="0 0 3 28" aria-hidden="true">
            <path d="M0 3h3L1.500 0zM0 25h3l-1.500 3z" fill="#333" />
            <path d="M1.500 6v16" stroke="#999" strokeDasharray="1 2" />
          </svg>
        </SideStrip>
      </Work>

      <StatusBar>
        <StatusCell $width={251} $first>Sheet 2 / 3</StatusCell>
        <StatusCell $width={267}>PageStyle_Sheet2</StatusCell>
        <StatusCell $width={41} />
        <StatusCell $width={25}>STD</StatusCell>
        <StatusCell $width={12}>*</StatusCell>
        <StatusCell $width={22} />
        <StatusCell $center>Sum=0</StatusCell>
        <ZoomGroup>
          <PlainIconButton aria-label="Zoom out">
            <Svg size={10}><circle cx="8" cy="8" r="6.500" fill="#c4dcec" stroke="#4e7189" strokeWidth="1.500" /><path d="M4.500 8h7" stroke="#2f4f66" strokeWidth="2" /></Svg>
          </PlainIconButton>
          <ZoomSlider type="range" aria-label="Zoom" min={0} max={100} defaultValue={35} />
          <PlainIconButton aria-label="Zoom in">
            <Svg size={10}><circle cx="8" cy="8" r="6.500" fill="#c4dcec" stroke="#4e7189" strokeWidth="1.500" /><path d="M4.500 8h7M8 4.500v7" stroke="#2f4f66" strokeWidth="2" /></Svg>
          </PlainIconButton>
        </ZoomGroup>
        <ZoomValue>78%</ZoomValue>
      </StatusBar>

      <TaskBar>
        <Pinned>
          {pinned.map(([label, art]) => (
            <PinnedButton key={label} aria-label={label}><Svg>{art}</Svg></PinnedButton>
          ))}
        </Pinned>
        <TaskButton>
          <Svg size={12}>
            <circle cx="8" cy="8" r="7.500" fill="#e8c62c" />
            <path d="M8 8L1.500 4.300A7.500 7.500 0 0 1 14.500 4.300z" fill="#dc4436" />
            <path d="M8 8L1.500 4.300A7.500 7.500 0 0 0 7 15.400z" fill="#3ea24c" />
            <circle cx="8" cy="8" r="3.300" fill="#3f7de0" stroke="#fff" />
          </Svg>
          Concurs: Câștigă do...
        </TaskButton>
        <TaskButton $active>
          <Svg size={12}>{sheetIcon}</Svg>
          Concurs Câștigă dou...
        </TaskButton>
        <Tray>
          <TrayArrow aria-label="Show hidden icons">
            <svg width="5" height="3" viewBox="0 0 5 3"><path d="M0 3h5L2.500 0z" fill="#fff" /></svg>
          </TrayArrow>
          <Svg size={12}><path d="M2 2v13" stroke="#fff" strokeWidth="1.500" /><path d="M3 3h6v1h6l-2 3 2 2H8V8H3z" fill="#fff" /></Svg>
          <svg width="7" height="12" viewBox="0 0 7 12" fill="none"><path d="M2.500 1h2v1h2v9.500H.5V2h2z" stroke="#fff" /><path d="M2 7h3v3H2z" fill="#fff" /></svg>
          <Svg size={12}><path d="M0 12h2v3H0zM3.500 10h2v5h-2zM7 7h2v8H7zM10.500 4h2v11h-2zM14 1h2v14h-2z" fill="#fff" /></Svg>
          <Svg size={12}><path d="M0 5h3l4-4v14l-4-4H0z" fill="#fff" /><path d="M9 5q2 3 0 6M11.500 3q4 5 0 10" stroke="#fff" strokeWidth="1.300" /></Svg>
          <Language>ROU</Language>
          <Clock>14:28</Clock>
        </Tray>
      </TaskBar>
    </Window>
  );
}
